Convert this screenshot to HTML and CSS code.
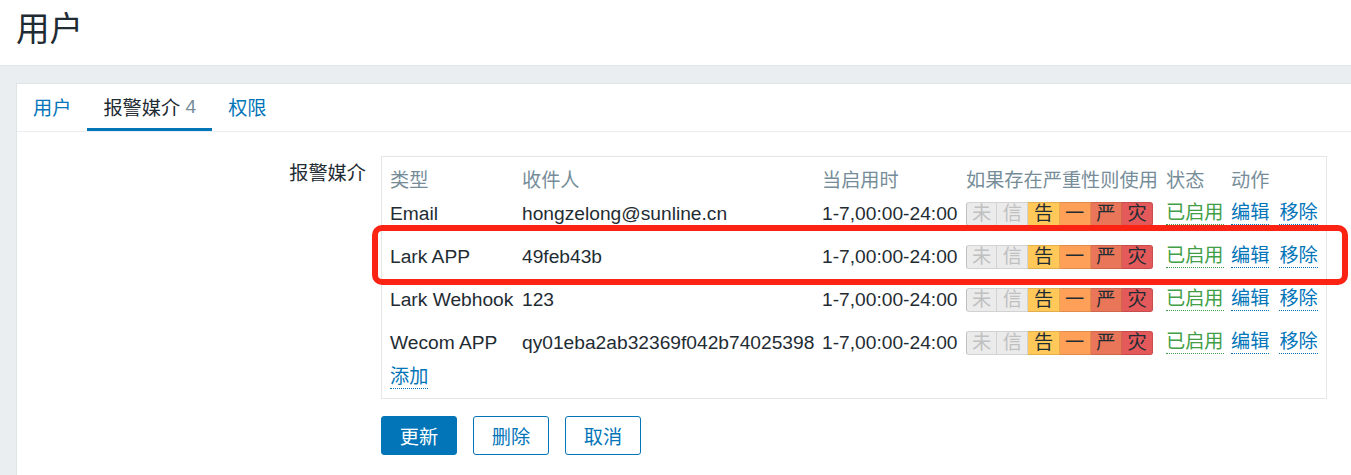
FILE: index.html
```html
<!DOCTYPE html>
<html lang="zh-CN">
<head>
<meta charset="utf-8">
<title>用户</title>
<link rel="stylesheet" href="styles.css">
</head>
<body>
<header class="page-header">
  <h1 class="title">用户</h1>
</header>
<main class="wrapper">
  <section class="card">
    <nav class="tabs">
      <a class="tab">用户</a>
      <a class="tab active">报警媒介 <span class="count">4</span></a>
      <a class="tab">权限</a>
    </nav>
    <div class="form">
      <div class="form-row">
        <div class="form-label">报警媒介</div>
        <div class="form-field">
          <div class="media-table">
            <div class="mrow head">
              <div>类型</div><div>收件人</div><div>当启用时</div><div>如果存在严重性则使用</div><div>状态</div><div>动作</div>
            </div>
            <div class="mrow">
              <div>Email</div><div>hongzelong@sunline.cn</div><div>1-7,00:00-24:00</div>
              <div class="sev"><span class="off">未</span><span class="off">信</span><span class="s-warn">告</span><span class="s-avg">一</span><span class="s-high">严</span><span class="s-dis">灾</span></div>
              <div><a class="link green">已启用</a></div>
              <div class="actions"><a class="link">编辑</a><a class="link">移除</a></div>
            </div>
            <div class="mrow">
              <div>Lark APP</div><div>49feb43b</div><div>1-7,00:00-24:00</div>
              <div class="sev"><span class="off">未</span><span class="off">信</span><span class="s-warn">告</span><span class="s-avg">一</span><span class="s-high">严</span><span class="s-dis">灾</span></div>
              <div><a class="link green">已启用</a></div>
              <div class="actions"><a class="link">编辑</a><a class="link">移除</a></div>
            </div>
            <div class="mrow">
              <div>Lark Webhook</div><div>123</div><div>1-7,00:00-24:00</div>
              <div class="sev"><span class="off">未</span><span class="off">信</span><span class="s-warn">告</span><span class="s-avg">一</span><span class="s-high">严</span><span class="s-dis">灾</span></div>
              <div><a class="link green">已启用</a></div>
              <div class="actions"><a class="link">编辑</a><a class="link">移除</a></div>
            </div>
            <div class="mrow">
              <div>Wecom APP</div><div>qy01eba2ab32369f042b74025398</div><div>1-7,00:00-24:00</div>
              <div class="sev"><span class="off">未</span><span class="off">信</span><span class="s-warn">告</span><span class="s-avg">一</span><span class="s-high">严</span><span class="s-dis">灾</span></div>
              <div><a class="link green">已启用</a></div>
              <div class="actions"><a class="link">编辑</a><a class="link">移除</a></div>
            </div>
            <div class="add-row"><a class="link">添加</a></div>
          </div>
          <div class="buttons">
            <button class="btn primary">更新</button>
            <button class="btn">删除</button>
            <button class="btn">取消</button>
          </div>
        </div>
      </div>
    </div>
  </section>
</main>
<div class="highlight"></div>
</body>
</html>
```

FILE: styles.css
```css
html, body {
  margin: 0;
  padding: 0;
}

body {
  background: #ebeef0;
  font-family: "Liberation Sans", "Noto Sans CJK SC", sans-serif;
  font-size: 19.2px;
  color: #1f2c33;
  height: 475px;
  overflow: hidden;
  position: relative;
}

.page-header {
  background: #fff;
  height: 66px;
  box-sizing: border-box;
  border-bottom: 1px solid #dfe4e7;
  display: flex;
  align-items: center;
  padding-left: 16px;
}

.title {
  margin: -6px 0 0 0;
  font-size: 33.6px;
  font-weight: normal;
  line-height: 1;
  color: #1f2c33;
}

.wrapper {
  padding: 17px 0 0 16px;
}

.card {
  background: #fff;
  border: 1px solid #dfe4e7;
  border-right: none;
  border-bottom: none;
  min-height: 391px;
}

.tabs {
  display: flex;
  height: 47px;
  border-bottom: 1px solid #ebeef0;
}

.tab {
  box-sizing: border-box;
  height: 47px;
  padding: 1px 16px 0;
  display: flex;
  align-items: center;
  color: #0275b8;
  border-bottom: 3px solid transparent;
  white-space: pre;
}

.tab.active {
  color: #1f2c33;
  border-bottom-color: #0275b8;
}

.count {
  color: #768d99;
}

.form {
  padding-top: 24px;
}

.form-row {
  display: grid;
  grid-template-columns: 349px 1fr;
  column-gap: 15px;
}

.form-label {
  text-align: right;
  line-height: 24px;
  padding-top: 6px;
}

.media-table {
  width: 946px;
  box-sizing: border-box;
  border: 1px solid #e4e6e8;
  padding: 8px 0 8px 8px;
}

.mrow {
  display: grid;
  grid-template-columns: 132px 300px 144px 200px 65px 1fr;
  height: 43px;
  align-items: center;
  white-space: nowrap;
}

.mrow.head {
  height: 27px;
  color: #768d99;
}

.sev {
  display: flex;
}

.sev span {
  box-sizing: border-box;
  width: 31.2px;
  height: 24px;
  display: flex;
  align-items: center;
  justify-content: center;
  border: 1px solid;
  border-left: none;
  line-height: 1;
}

.sev span:first-child {
  border-left: 1px solid;
  border-radius: 3px 0 0 3px;
}

.sev span:last-child {
  border-radius: 0 3px 3px 0;
}

.sev .off {
  background: #ebebeb;
  color: #c0c0c0;
  border-color: #d2d2d2;
}

.sev .s-warn {
  background: #ffc859;
  border-color: #e2ae4d;
}

.sev .s-avg {
  background: #ffa059;
  border-color: #e08c4d;
}

.sev .s-high {
  background: #e97659;
  border-color: #cf664c;
}

.sev .s-dis {
  background: #e45959;
  border-color: #c94c4c;
}

.link {
  color: #0275b8;
  text-decoration: none;
  border-bottom: 1px dotted #0275b8;
  line-height: 22px;
  display: inline-block;
}

.link.green {
  color: #429e47;
  border-bottom-color: #429e47;
}

.actions {
  display: flex;
  gap: 10px;
}

.add-row {
  height: 26px;
  display: flex;
  align-items: center;
}

.buttons {
  display: flex;
  gap: 16px;
  margin-top: 17px;
}

.btn {
  box-sizing: border-box;
  width: 76px;
  height: 39px;
  border: 1px solid #0275b8;
  border-radius: 3px;
  background: #fff;
  color: #0275b8;
  font-family: inherit;
  font-size: 19.2px;
  padding: 0;
}

.btn.primary {
  background: #0275b8;
  color: #fff;
}

.highlight {
  position: absolute;
  left: 372px;
  top: 225px;
  width: 976px;
  height: 60px;
  box-sizing: border-box;
  border: 6px solid #fa2314;
  border-radius: 10px;
}
```
